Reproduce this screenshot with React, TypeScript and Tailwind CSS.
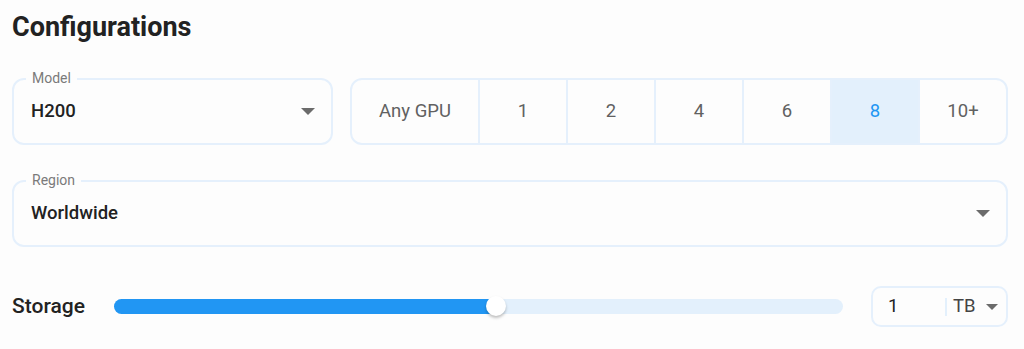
import React from "react";

const Arrow = ({ w = 14, h = 7 }: { w?: number; h?: number }) => (
  <svg width={w} height={h} viewBox="0 0 10 5" className="shrink-0">
    <path d="M0 0 L5 5 L10 0 Z" fill="#6b6b6b" />
  </svg>
);

const Outlined = ({ label, value, className }: { label: string; value: string; className?: string }) => (
  <div className={"relative h-[67px] rounded-[12px] border-2 border-[#e5f0fc] flex items-center pl-[17px] pr-[16px] " + (className ?? "")}>
    <span className="absolute left-[12px] top-[-11px] px-[6px] bg-[#fdfdfd] text-[14px] leading-[18px] text-[#7a7a7a]">{label}</span>
    <span className="flex-1 text-[18.5px] font-medium text-[#222]">{value}</span>
    <Arrow />
  </div>
);

export default function App() {
  const opts = ["Any GPU", "1", "2", "4", "6", "8", "10+"];
  return (
    <div className="w-full h-[349px] bg-[#fdfdfd] pl-[12px] pr-[16px] pt-[10px] overflow-hidden" style={{ fontFamily: "Roboto, 'Liberation Sans', sans-serif" }}>
      <div className="h-[34px] leading-[34px] text-[27px] font-bold text-[#222]">Configurations</div>
      <div className="mt-[34px] flex gap-[17px]">
        <Outlined label="Model" value="H200" className="w-[321px]" />
        <div className="flex-1 h-[67px] rounded-[12px] border-2 border-[#e5f0fc] flex overflow-hidden">
          {opts.map((o, i) => (
            <div
              key={o}
              className={
                "flex items-center justify-center text-[18.5px] " +
                (i === 0 ? "w-[126px] " : "flex-1 border-l-2 border-[#e5f0fc] ") +
                (o === "8" ? "bg-[#e3f0fc] text-[#2196f3]" : "text-[#616161]")
              }
            >
              {o}
            </div>
          ))}
        </div>
      </div>
      <Outlined label="Region" value="Worldwide" className="mt-[35px]" />
      <div className="mt-[39px] h-[41px] flex items-center">
        <div className="w-[102px] text-[21px] font-medium text-[#222]">Storage</div>
        <div className="relative w-[729px] h-[15px] rounded-full bg-[#e3f0fc]">
          <div className="h-full w-[382px] rounded-full bg-[#2196f3]" />
          <div className="absolute left-[372px] top-[-3px] w-[20px] h-[20px] rounded-full bg-white shadow-[0_2px_3px_rgba(0,0,0,0.25)]" />
        </div>
        <div className="ml-[28px] flex-1 h-[41px] rounded-[10px] border-2 border-[#e5f0fc] flex items-center pl-[15px] pr-[8px]">
          <span className="w-[57px] text-[18.5px] text-[#222]">1</span>
          <span className="w-[2px] h-[18px] bg-[#e3f0fc]" />
          <span className="ml-[6px] flex-1 text-[18.5px] text-[#444]">TB</span>
          <Arrow w={12} h={6} />
        </div>
      </div>
    </div>
  );
}
